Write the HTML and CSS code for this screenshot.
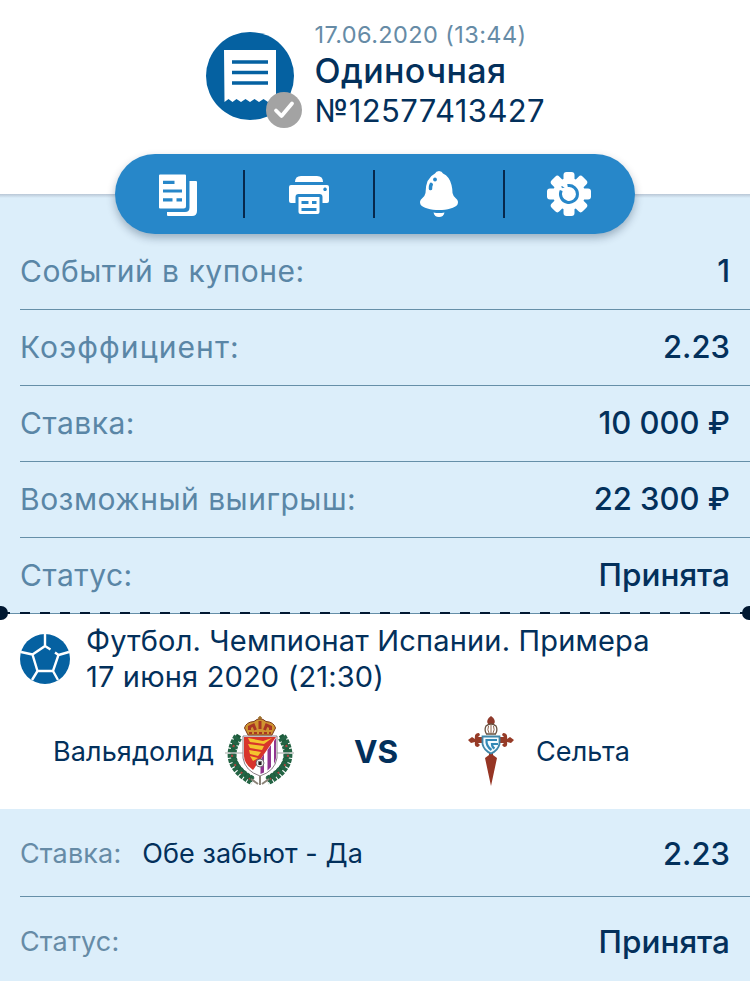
FILE: index.html
```html
<!DOCTYPE html>
<html lang="ru">
<head>
    <meta charset="UTF-8">
    <meta name="viewport" content="width=device-width, initial-scale=1.0">
    <title>Одиночная №12577413427</title>
    <link rel="stylesheet" href="styles.css">
</head>
<body>
    <header class="header">
        <svg class="ticket-icon" width="96" height="96" viewBox="0 0 96 96">
            <circle cx="44" cy="44" r="44" fill="#0561a1"/>
            <path d="M18 18H70V69l-4-2-4 3-4.500-3-4.500 3-4.500-3-4.500 3-4.500-3-4.500 3-4.500-3-4 3-4-3-4 3z" fill="#fff"/>
            <path d="M26 30H62M26 40.500H62M26 51H62" stroke="#0561a1" stroke-width="3.600"/>
            <circle cx="78" cy="78" r="18" fill="#a3a3a3"/>
            <path d="M70 78.500l5.500 5.500L86 71.500" fill="none" stroke="#fff" stroke-width="3.800" stroke-linecap="round" stroke-linejoin="round"/>
        </svg>
        <div class="ticket-info">
            <div class="ticket-date">17.06.2020 (13:44)</div>
            <h1 class="ticket-type">Одиночная</h1>
            <div class="ticket-number">№12577413427</div>
        </div>
    </header>

    <nav class="toolbar">
        <button class="tool" aria-label="Копировать">
            <svg width="48" height="48" viewBox="10 0 48 48">
                <path fill="#fff" fill-rule="evenodd" d="M15 4.500H40Q41 4.500 41 5.500V36Q41 38.500 38.500 38.500H15Q14 38.500 14 37.500V5.500Q14 4.500 15 4.500zM18 10.800V14H29.500V10.800zM18 19.400V22.600H37V19.400zM18 28.300V31.500H27.500V28.300zM31.500 28.300V31.500H37V28.300z"/>
                <path fill="#fff" d="M44.500 11H51Q52 11 52 12V41Q52 46 47 46H23Q22 46 22 45V42H40Q44.500 42 44.500 37.500z"/>
            </svg>
        </button>
        <button class="tool" aria-label="Печать">
            <svg width="48" height="48" viewBox="0 0 48 48">
                <path fill="#fff" d="M10 12Q10 6 16 6H32Q38 6 38 12z"/>
                <path fill="#fff" fill-rule="evenodd" d="M6 15H42Q44 15 44 17V31Q44 33 42 33H37.500V27Q37.500 24 34.500 24H13.500Q10.500 24 10.500 27V33H6Q4 33 4 31V17Q4 15 6 15zM40 17.500a1.800 1.800 0 1 0 .1 0z"/>
                <path fill="#fff" fill-rule="evenodd" d="M13.500 27H34.500V42Q34.500 44 32.500 44H15.500Q13.500 44 13.500 42zM16.500 31V34H23.500V31zM27 31V34H31.500V31zM16.500 38V41H31.500V38z"/>
            </svg>
        </button>
        <button class="tool" aria-label="Уведомления">
            <svg width="48" height="48" viewBox="0 0 48 48">
                <path fill="#fff" d="M20 3.500Q21 1 24 1T28 3.500Q34.500 6.500 36.500 15Q37.500 19 37.500 23Q38 26 41 28.500Q44 31 42.500 34.500C40.500 38 32 40 24 40S7.500 38 5.500 34.500Q4 31 7 28.500Q10 26 10.500 23Q10.500 8 20 3.500z"/>
                <path fill="#fff" d="M18.500 42.500Q24 43.500 29.500 42.500Q28.500 47 24 47T18.500 42.500z"/>
                <path d="M16.200 14.500Q15.200 16.500 15.500 18.500" fill="none" stroke="#2787c9" stroke-width="3.600" stroke-linecap="round"/>
                <circle cx="20" cy="9.500" r="1.900" fill="#2787c9"/>
            </svg>
        </button>
        <button class="tool" aria-label="Настройки">
            <svg width="48" height="48" viewBox="0 0 48 48">
                <g fill="#fff">
                    <rect x="18.500" y="2" width="11" height="44" rx="3"/>
                    <rect x="18.500" y="2" width="11" height="44" rx="3" transform="rotate(45 24 24)"/>
                    <rect x="18.500" y="2" width="11" height="44" rx="3" transform="rotate(90 24 24)"/>
                    <rect x="18.500" y="2" width="11" height="44" rx="3" transform="rotate(135 24 24)"/>
                    <circle cx="24" cy="24" r="16"/>
                </g>
                <path d="M22.500 15.600A8.500 8.500 0 1 1 16.200 20.500" fill="none" stroke="#2787c9" stroke-width="3"/>
                <path d="M16.500 16.500L19.500 18.500" stroke="#2787c9" stroke-width="1.500"/>
                <path d="M19.500 19.500L23 23" stroke="#fff" stroke-width="4" stroke-linecap="round"/>
            </svg>
        </button>
    </nav>

    <section class="summary">
        <div class="row"><span class="label">Событий в купоне:</span><span class="value">1</span></div>
        <div class="row"><span class="label label-wide">Коэффициент:</span><span class="value">2.23</span></div>
        <div class="row"><span class="label">Ставка:</span><span class="value">10 000 ₽</span></div>
        <div class="row"><span class="label">Возможный выигрыш:</span><span class="value">22 300 ₽</span></div>
        <div class="row"><span class="label">Статус:</span><span class="value status">Принята</span></div>
    </section>

    <div class="tear">
        <svg width="750" height="16" viewBox="0 0 750 16">
            <path d="M0 8.500H750" stroke="#668fa8"/>
            <path d="M20 8H750" stroke="#011831" stroke-width="2" stroke-dasharray="10 10"/>
            <path d="M0 8H10" stroke="#011831" stroke-width="2"/>
            <circle cx="1" cy="8" r="7" fill="#011831"/>
            <circle cx="749" cy="8" r="7" fill="#011831"/>
        </svg>
    </div>

    <section class="event">
        <div class="event-head">
            <svg width="50" height="50" viewBox="0 0 50 50">
                <circle cx="25" cy="25" r="25" fill="#0561a1"/>
                <path d="M25 0V12L12.500 20.500L17.500 37H33L38.500 21L35 18.500M30.500 15.500L25 12M12.500 20.500L1 18M38.500 21L49 18M17.500 37L12 46M33 37L38 46" fill="none" stroke="#fff" stroke-width="2.400"/>
            </svg>
            <div class="event-text">
                <div class="event-title">Футбол. Чемпионат Испании. Примера</div>
                <div class="event-date">17 июня 2020 (21:30)</div>
            </div>
        </div>
        <div class="match">
            <span class="team team-home">Вальядолид</span>
            <svg class="crest-home" width="70" height="72" viewBox="0 0 70 72">
                <!-- laurel -->
                <path d="M14 20Q-3 46 28 65M56 20Q73 46 42 65" fill="none" stroke="#1b5a3a" stroke-width="5"/>
                <path d="M13 22Q-4 49 28 66M57 22Q74 49 42 66" fill="none" stroke="#246444" stroke-width="9" stroke-dasharray="3.500 1"/>
                <path d="M9 30Q1 49 25 64M61 30Q69 49 45 64" fill="none" stroke="#b0433f" stroke-width="2" stroke-dasharray="2 8"/>
                <path d="M26 64L33 69M44 64L37 69M35 61V70" stroke="#8b8378" stroke-width="2"/>
                <path d="M0 38H69" stroke="#c2c4c2" stroke-width="1.500"/>
                <!-- shield -->
                <path d="M18 21H52V43Q50 56 35 61Q20 56 18 43z" fill="#fff" stroke="#8a7f86" stroke-width="1"/>
                <path d="M19 22H51L28 55Q19 49 19 41z" fill="#d8352b"/>
                <path d="M23 23L38 26L47 23L39 29L25 27zM23 29L39 31L37 35L25 33zM24 35L36 37L33 41L25 39zM25 41L33 43L28 46z" fill="#f4c52e"/>
                <path d="M51 23V43Q50.500 46 49 49V26zM46 30V52L42.500 55.500V35zM39 39V57.500L35.500 59V45z" fill="#91358f"/>
                <circle cx="35" cy="48" r="4" fill="#eee" stroke="#555" stroke-width=".8"/>
                <path d="M33.500 46.500L36.500 49.500M36.500 46.500L33.500 49.500" stroke="#222" stroke-width="1.600"/>
                <!-- crown -->
                <path d="M23 20L19.500 13Q21 7 29 6.500Q35 1 41 6.500Q49 7 50.500 13L47 20z" fill="#cf9430" stroke="#7b3a1c" stroke-width="1"/>
                <path d="M24.500 15V12L28.500 10L30.500 15M35 14V6M39.500 15L41.500 10L45.500 12V15" fill="none" stroke="#a93624" stroke-width="3"/>
                <path d="M24 18H46" stroke="#a93624" stroke-width="2" stroke-dasharray="3 2"/>
                <path d="M35 1V5M33 3H37" stroke="#9b6a24" stroke-width="1.500"/>
            </svg>
            <span class="versus">VS</span>
            <svg class="crest-away" width="48" height="72" viewBox="0 0 48 72">
                <path d="M22 37H26V40L30 43L24 71L18 43L22 40z" fill="#963524"/>
                <path d="M20.500 5Q21 3 24 1Q27 3 27.500 5Q28.500 8 26 9.500H22Q19.500 8 20.500 5z" fill="#8f3a2b"/>
                <path d="M1 25L5 22L8 24Q7 18 12 18L13 20L11 22H16V28H11L13 30L11 32Q7 32 8 27L4 28zM47 25L43 22L40 24Q41 18 36 18L35 20L37 22H32V28H37L35 30L37 32Q41 32 40 27L44 28z" fill="#963b27"/>
                <path d="M19 11Q24 7 29 11Q31 15 28.500 19H19.500Q17 15 19 11z" fill="#fff" stroke="#66503f" stroke-width="1.300"/>
                <path d="M21.500 11Q20 15 22 18M26.500 11Q28 15 26 18M24 9V19" stroke="#8f6650" fill="none"/>
                <path d="M15.500 21.500H32.500V29Q31 35.500 24 38.500Q17 35.500 15.500 29z" fill="#f4fbff" stroke="#3f86a8" stroke-width="1.800"/>
                <path d="M30 25H19.500Q19 31 24.500 35M31 29H25Q25 32 27.500 33.500" stroke="#3289b6" fill="none" stroke-width="2.200"/>
            </svg>
            <span class="team team-away">Сельта</span>
        </div>
    </section>

    <section class="bet">
        <div class="bet-row">
            <span class="bet-label">Ставка:</span>
            <span class="bet-name">Обе забьют - Да</span>
            <span class="value">2.23</span>
        </div>
        <div class="bet-row">
            <span class="bet-label">Статус:</span>
            <span class="value status">Принята</span>
        </div>
    </section>
</body>
</html>
```
FILE: styles.css
```css
* {
    box-sizing: border-box;
}
body {
    margin: 0;
    width: 750px;
    height: 981px;
    overflow: hidden;
    background: #fff;
    color: #03305b;
    font-family: Inter, "Noto Sans", sans-serif;
    white-space: nowrap;
}
svg {
    display: block;
    flex: none;
    overflow: visible;
}
.header {
    display: flex;
    height: 194px;
    padding: 20px 0 0 206px;
}
.ticket-icon {
    margin-top: 12px;
}
.ticket-info {
    padding-left: 12.500px;
}
.ticket-date {
    font-size: 23.500px;
    line-height: 30px;
    letter-spacing: 0.4px;
    color: #668ba6;
}
.ticket-type {
    margin: 0;
    font-size: 34px;
    line-height: 42px;
    font-weight: 500;
    letter-spacing: 0.4px;
}
.ticket-number {
    font-size: 31px;
    line-height: 38px;
    letter-spacing: 0.4px;
}
.toolbar {
    display: flex;
    position: relative;
    width: 520px;
    height: 80px;
    margin: -40px auto;
    padding: 16px 0;
    border-radius: 40px;
    background: #2787c9;
    box-shadow: 0 4px 8px rgba(0, 30, 60, 0.3);
}
.tool {
    display: flex;
    flex: 1;
    justify-content: center;
    padding: 0;
    border: none;
    border-right: 2px solid #07284c;
    background: none;
    cursor: pointer;
}
.tool:last-child {
    border-color: transparent;
}
.summary {
    height: 419px;
    padding: 40px 0 0 20px;
    background: linear-gradient(#b9c7d6, #dceefa 4px);
}
.row {
    display: flex;
    align-items: center;
    justify-content: space-between;
    height: 76px;
    padding: 0 20px 2px 0;
    border-bottom: 1px solid #668fa8;
}
.row:last-child {
    border-bottom-color: transparent;
}
.label {
    font-size: 30px;
    letter-spacing: 0.5px;
    color: #5a86a6;
}
.label-wide {
    letter-spacing: 1.1px;
}
.value {
    font-size: 31px;
    font-weight: 500;
}
.status {
    font-size: 31.500px;
}
.tear {
    position: relative;
    height: 16px;
    margin: -8px 0;
}
.event {
    height: 196px;
    padding-top: 10px;
}
.event-head {
    display: flex;
    align-items: center;
    padding-left: 20px;
}
.event-text {
    padding-left: 16px;
    font-size: 29px;
    line-height: 36px;
    letter-spacing: 0.17px;
}
.match {
    display: flex;
    align-items: center;
    height: 72px;
    margin-top: 20px;
}
.team {
    font-size: 27px;
    letter-spacing: 0.1px;
}
.team-home {
    width: 172px;
    margin-left: 53px;
}
.versus {
    width: 172px;
    padding-left: 59px;
    font-size: 31.500px;
    font-weight: 700;
}
.team-away {
    margin-left: 21px;
}
.bet {
    height: 172px;
    padding-left: 20px;
    background: #dceefa;
}
.bet-row {
    display: flex;
    align-items: center;
    height: 88px;
    padding: 1px 20px 0 0;
    border-bottom: 1px solid #668fa8;
}
.bet-row .value {
    margin-left: auto;
}
.bet-label {
    font-size: 27px;
    letter-spacing: 0.15px;
    color: #668ba6;
}
.bet-name {
    margin-left: 21px;
    font-size: 27px;
    letter-spacing: 0.05px;
}
```
